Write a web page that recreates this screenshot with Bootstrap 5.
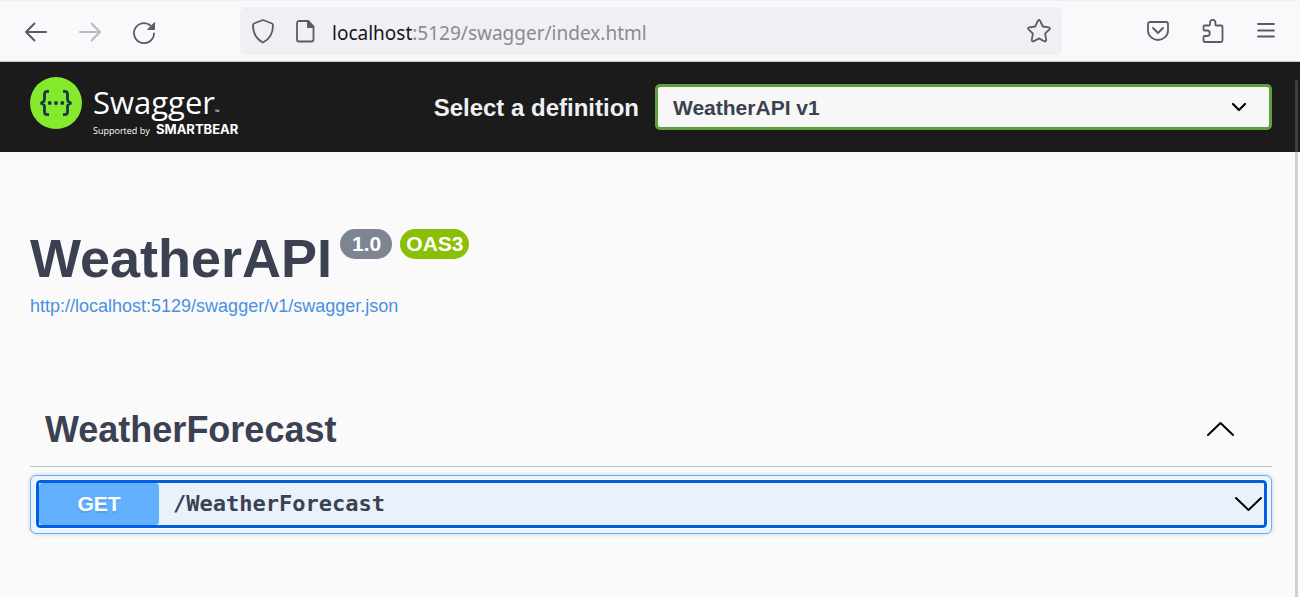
<!DOCTYPE html>
<html lang="en">
<head>
<meta charset="utf-8">
<meta name="viewport" content="width=device-width, initial-scale=1">
<title>Swagger UI</title>
<link href="https://cdn.jsdelivr.net/npm/bootstrap@5.3.0/dist/css/bootstrap.min.css" rel="stylesheet">
<style>
  body { background: #fafafa; color: #3b4151; font-family: "Liberation Sans", Arial, sans-serif; }
  svg { display: block; }
  .browser-bar { background: #f9f9fb; border-top: 1px solid #f0f0f4; border-bottom: 1px solid #c3cdc5; padding: 6px 24px 6px 24px; color: #5b5b66; }
  .browser-bar button { border: 0; background: none; padding: 0; color: inherit; }
  .browser-bar button:disabled { opacity: .4; }
  .nav-keys { width: 216px; gap: 30px; }
  .tool-keys { width: 214px; gap: 31px; }
  .address { background: #f0f0f4; border-radius: 6px; height: 48px; padding: 0 11px; }
  .address-text { font: 19px/28px "Noto Sans", sans-serif; color: #8a8a90; margin-left: 15px; padding-top: 4px; }
  .address-text b { font-weight: 400; color: #15141a; }
  .topbar { background: #1b1b1b; padding: 15px 28px 15px 30px; height: 90px; }
  .brand-text { padding: 8px 0 0 11px; }
  .wordmark { font: 400 31px/34px "Open Sans", sans-serif; color: #fff; }
  .tm { font-size: 6px; line-height: 1; }
  .backer { font: 9px/20px "Open Sans", sans-serif; color: #fff; }
  .backer b { font: 700 13px/20px Inter, sans-serif; margin-left: 4px; }
  .def-label { font-size: 24px; font-weight: 700; color: #f0f0f0; padding-top: 2px; }
  .def-select { width: calc(50% - 4px); }
  .def-select select { height: 46px; border: 3px solid #62a03f; border-radius: 5px; background: #f7f7f7; color: #3b4151; font-size: 21px; font-weight: 700; padding: 2px 15px 0; appearance: none; }
  .def-select svg { position: absolute; right: 24px; top: 15px; pointer-events: none; }
  main { padding: 76px 28px 40px 30px; }
  .api-title { font-size: 54px; line-height: 60px; font-weight: 700; }
  .pill { height: 30px; line-height: 30px; border-radius: 15px; color: #fff; font-size: 21px; font-weight: 700; background: #7d8492; margin-top: 1px; }
  .pill-version { padding: 0 11px 0 12px; }
  .pill-oas { background: #89bf04; padding: 0 6px; }
  .spec-link { font-size: 18px; line-height: 24px; color: #4990e2; margin-top: 6px; }
  .tag-head { margin-top: 87px; padding: 0 38px 12px 15px; border-bottom: 1px solid #c0c1c5; }
  .tag-head h2 { font-size: 36px; line-height: 48px; font-weight: 700; }
  .tag-head button { border: 0; background: none; padding: 0; }
  .opblock { margin-top: 8px; padding: 4px 4px 5px 5px; border: 1px solid #61affe; border-radius: 6px; background: #ebf3fb; box-shadow: 0 0 4px rgba(0,0,0,.19); }
  .op-summary { height: 48px; padding: 0 2px 0 0; border: 3px solid #0060df; border-radius: 4px; background: #e9f1fa; outline: 1px solid #fff; color: #3b4151; }
  .op-method { width: 120px; line-height: 42px; border-radius: 4px; background: #61affe; color: #fff; font-size: 21px; font-weight: 700; text-shadow: 0 2px 0 rgba(0,0,0,.1); }
  .op-path { font: 700 22px/42px "DejaVu Sans Mono", monospace; margin-left: 14px; }
  .scroll-thumb { position: fixed; right: 2px; top: 80px; bottom: 0; width: 3px; background: rgba(128,128,128,.35); border-radius: 2px 2px 0 0; }
</style>
</head>
<body>
<header class="browser-bar d-flex align-items-center">
  <div class="nav-keys d-flex align-items-center">
    <button aria-label="Back"><svg width="24" height="26" fill="none" stroke="currentColor" stroke-width="2" stroke-linecap="round" stroke-linejoin="round"><path d="M22 14H2M10.500 5.500L2 14l8.500 8.500"/></svg></button>
    <button aria-label="Forward" disabled><svg width="24" height="26" fill="none" stroke="currentColor" stroke-width="2" stroke-linecap="round" stroke-linejoin="round"><path d="M2 14h20M13.500 5.500L22 14l-8.500 8.500"/></svg></button>
    <button aria-label="Reload"><svg width="24" height="26" fill="none" stroke="currentColor" stroke-width="1.800" stroke-linecap="round"><path d="M18.500 7.500A10 10 0 1 0 22 15.500"/><path d="M22.500 5v6.500H16z" fill="currentColor" stroke-width="1" stroke-linejoin="round"/></svg></button>
  </div>
  <div class="address d-flex align-items-center flex-grow-1">
    <svg width="24" height="26" fill="none" stroke="currentColor" stroke-width="1.800" stroke-linejoin="round"><path d="M12 2l9 3.500q1 .4 1 1.500C22 15 18 21.500 12 24.500 6 21.500 2 15 2 7q0-1.100 1-1.500z"/></svg>
    <svg class="ms-3" width="26" height="26" fill="none" stroke="currentColor" stroke-width="1.800" stroke-linejoin="round"><path d="M16 3H8a2 2 0 0 0-2 2v16.500a2 2 0 0 0 2 2h12.500a2 2 0 0 0 2-2V8.500L17.500 3z"/><path d="M16.500 3v6.500h6z" fill="currentColor" stroke-width="1"/></svg>
    <div class="address-text flex-grow-1"><b>localhost</b>:5129/swagger/index.html</div>
    <button aria-label="Bookmark this page"><svg width="24" height="26" fill="none" stroke="currentColor" stroke-width="1.800" stroke-linejoin="round"><path d="M10.800 2.900q1.200-1.800 2.400 0l2.600 5.600 5.900.8q2 .5.700 2.100l-4.300 4.300 1.100 6q0 2.200-2 1.500L12 20.400l-5.200 2.800q-2 .7-2-1.500l1.100-6-4.300-4.300Q.3 9.800 2.300 9.300l5.900-.8z"/></svg></button>
  </div>
  <div class="tool-keys d-flex align-items-center justify-content-end">
    <button aria-label="Save to Pocket"><svg width="24" height="24" fill="none" stroke="currentColor" stroke-width="1.800" stroke-linecap="round" stroke-linejoin="round"><path d="M4 3h16a2 2 0 0 1 2 2v6.500a10 9.500 0 0 1-20 0V5a2 2 0 0 1 2-2z"/><path d="M7 9l5 5 5-5"/></svg></button>
    <button aria-label="Extensions"><svg width="24" height="26" fill="none" stroke="currentColor" stroke-width="1.800" stroke-linejoin="round"><path d="M3.500 7.500H8q1 0 1-1V4.500a2.700 2.700 0 0 1 5.400 0v2q0 1 1 1h4.600q1.500 0 1.500 1.500v13.500q0 1.500-1.500 1.500H4q-1.500 0-1.500-1.500V19.500q0-1.500 1-1.500h2.500a2.700 2.700 0 0 0 0-5.500H3.500q-1 0-1-1V9q0-1.500 1-1.500z"/></svg></button>
    <button aria-label="Menu"><svg width="20" height="24" fill="none" stroke="currentColor" stroke-width="1.800" stroke-linecap="round"><path d="M2 5h16M2 11.500h16M2 17.500h16"/></svg></button>
  </div>
</header>

<nav class="topbar d-flex align-items-center">
  <a href="#" class="d-flex text-decoration-none align-self-start" aria-label="Swagger">
    <svg width="52" height="52"><circle cx="26" cy="26" r="26" fill="#85ea2d"/><g fill="none" stroke="#173647" stroke-width="2.800"><path d="M19 14.300h-1.500q-3 0-3 3v4.500q0 4.200-4.200 4.200 4.200 0 4.200 4.200v4.500q0 3 3 3H19M33 14.300h1.500q3 0 3 3v4.500q0 4.200 4.200 4.200-4.200 0-4.200 4.200v4.500q0 3-3 3H33"/></g><g fill="#173647"><circle cx="19.700" cy="26" r="1.900"/><circle cx="26" cy="26" r="1.900"/><circle cx="32.300" cy="26" r="1.900"/></g></svg>
    <span class="brand-text d-flex flex-column">
      <span class="wordmark">Swagger<span class="tm">™</span></span>
      <span class="backer">Supported by <b>SMARTBEAR</b></span>
    </span>
  </a>
  <label class="def-label ms-auto me-3" for="definition">Select a definition</label>
  <div class="def-select position-relative">
    <select id="definition" class="w-100"><option>WeatherAPI v1</option></select>
    <svg width="18" height="16" fill="none" stroke="#000" stroke-width="2.200" stroke-linecap="round" stroke-linejoin="round"><path d="M3 5l6 6 6-6"/></svg>
  </div>
</nav>

<main>
  <div class="d-flex align-items-start gap-2">
    <h1 class="api-title mb-0">WeatherAPI</h1>
    <span class="pill pill-version">1.0</span>
    <span class="pill pill-oas">OAS3</span>
  </div>
  <a href="#" class="spec-link d-inline-block text-decoration-none">http://localhost:5129/swagger/v1/swagger.json</a>

  <div class="tag-head d-flex align-items-center justify-content-between">
    <h2 class="mb-0">WeatherForecast</h2>
    <button aria-label="Collapse operations"><svg width="27" height="18" fill="none" stroke="#000" stroke-width="2" stroke-linecap="round" stroke-linejoin="round"><path d="M1 14L13.500 2 26 14"/></svg></button>
  </div>
  <div class="opblock">
    <button class="op-summary w-100 d-flex align-items-center text-start">
      <span class="op-method text-center">GET</span>
      <span class="op-path">/WeatherForecast</span>
      <svg class="ms-auto" width="27" height="16" fill="none" stroke="#000" stroke-width="2" stroke-linecap="round" stroke-linejoin="round"><path d="M1 2l12.500 12L26 2"/></svg>
    </button>
  </div>
</main>
<div class="scroll-thumb"></div>
<script src="https://cdn.jsdelivr.net/npm/bootstrap@5.3.0/dist/js/bootstrap.bundle.min.js"></script>
</body>
</html>
